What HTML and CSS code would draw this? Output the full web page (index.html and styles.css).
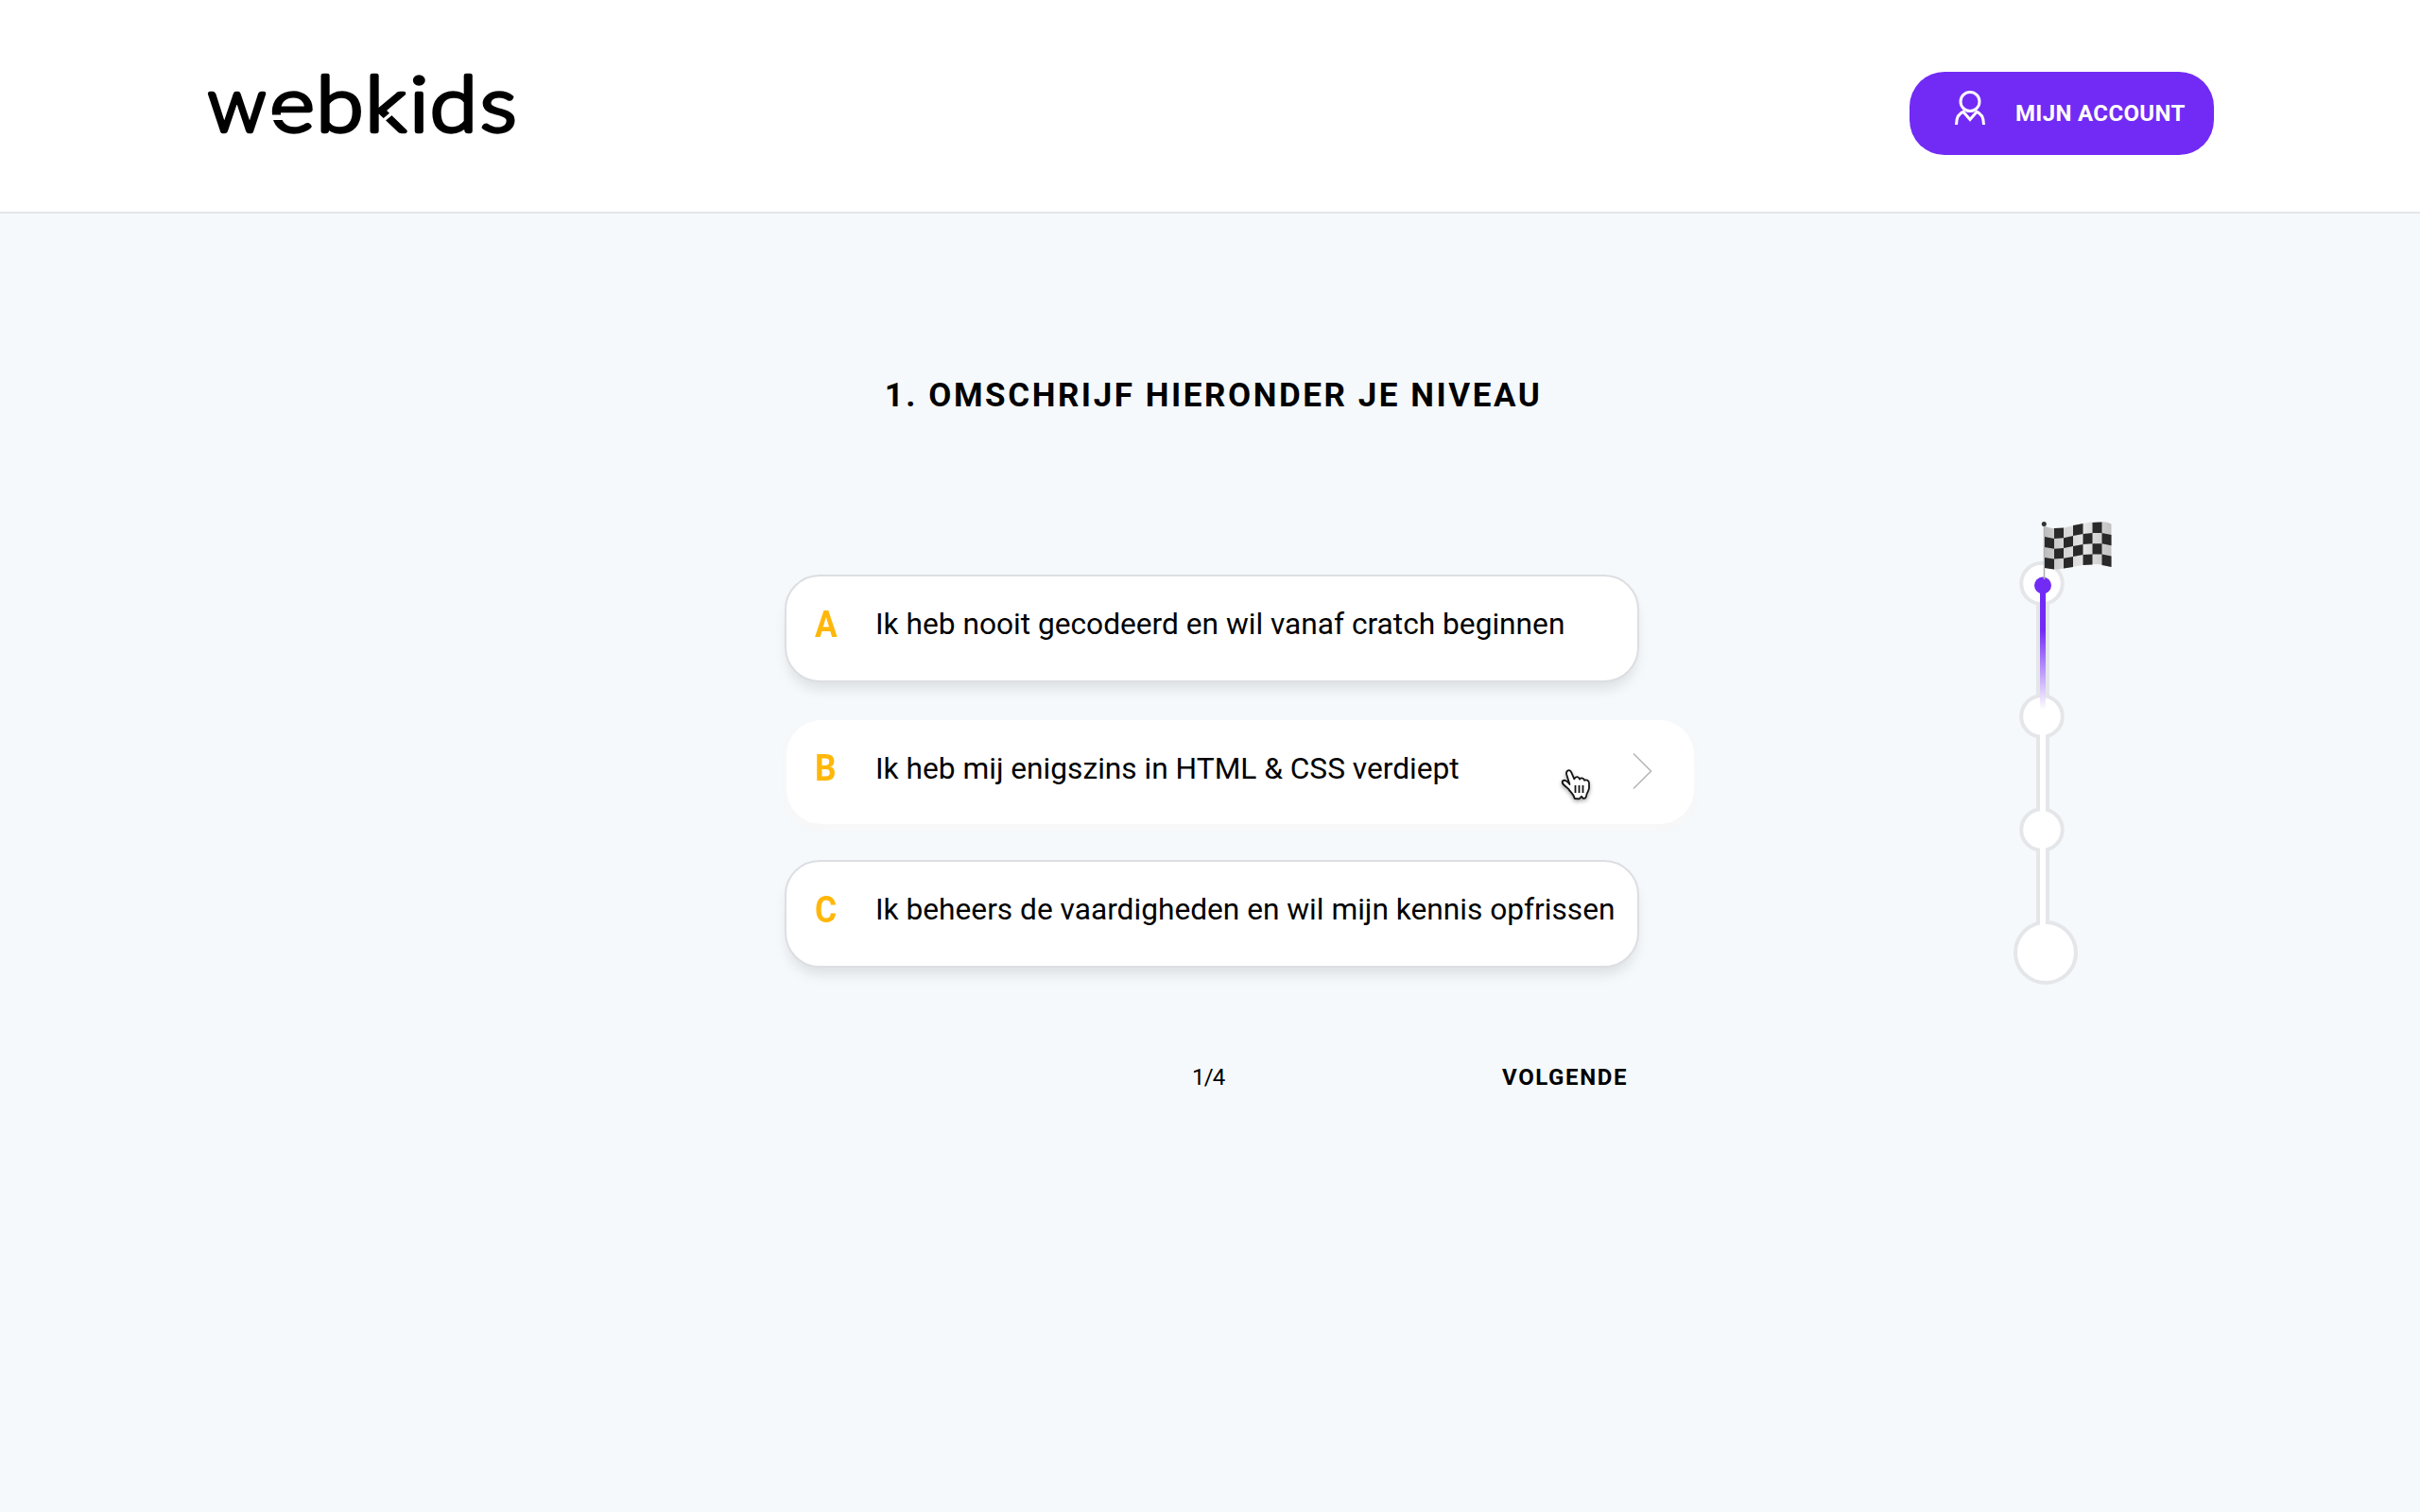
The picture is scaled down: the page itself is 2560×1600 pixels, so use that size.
FILE: index.html
```html
<!DOCTYPE html>
<html lang="nl">
<head>
<meta charset="utf-8">
<title>Webkids</title>
<link rel="stylesheet" href="styles.css">
</head>
<body>
<header class="header">
  <svg class="logo" width="340" height="100" viewBox="0 0 340 100" role="img" aria-label="webkids">
    <text class="logo-text" y="79" x="4">w</text>
    <text class="logo-text" transform="scale(1.13 1)" y="79" x="61.500 104.800 151 192.300 211.600 258.500">ebkids</text>
    <path d="M68 61.500h49v5.500H68z" fill="#fff"/>
    <path d="M190 67 206 53.500" stroke="#fff" stroke-width="3.500"/>
  </svg>
  <a class="account">
    <svg class="account-icon" width="34" height="38" viewBox="0 0 34 38" fill="none" stroke="#fff" stroke-width="3">
      <circle cx="17" cy="12.500" r="10"/>
      <path d="M2.500 37c0-7 3-12.500 8.500-14.200M31.500 37c0-7-3-12.500-8.500-14.200M10 23.500l7 8 7-8"/>
    </svg>
    <span class="account-label">MIJN ACCOUNT</span>
  </a>
</header>
<main class="main">
  <section class="quiz">
    <h1 class="title">1. OMSCHRIJF HIERONDER JE NIVEAU</h1>
    <div class="answers">
      <div class="answer"><b class="letter">A</b><span class="answer-text">Ik heb nooit gecodeerd en wil vanaf cratch beginnen</span></div>
      <div class="answer active"><b class="letter">B</b><span class="answer-text">Ik heb mij enigszins in HTML &amp; CSS verdiept</span>
        <svg class="chevron" width="24" height="42" viewBox="0 0 24 42" fill="none" stroke="#b9b9bb" stroke-width="1.700"><path d="M2 2.500 20.500 21 2 39.500"/></svg>
        <svg class="pointer" width="36" height="40" viewBox="0 0 36 40"><path d="M9.500 18 6.200 7.500C5.200 3 9.800 1.600 11.300 5.300l3 7c1.500-3.300 5-2.700 5.700.3 1.800-2 4.600-1.200 5.100 1.200 2.300-1.300 4.800.2 4.900 3v5c0 3-2.700 5-2.900 8.500l-1 2.200-2.600.3-1.500-2-2.500 2.500-4.800-.3c-.5-4-4.200-6.500-6.200-9.800C4.200 19 .5 17.500 2 14.500c2-2 5 .3 7.500 3.500zM15.500 19v8M19.500 19v8M23.500 19v8" fill="#fff" stroke="#151515" stroke-width="1.800" stroke-linejoin="round"/></svg>
      </div>
      <div class="answer"><b class="letter">C</b><span class="answer-text">Ik beheers de vaardigheden en wil mijn kennis opfrissen</span></div>
    </div>
    <footer class="pager"><span class="count">1/4</span><a class="next">VOLGENDE</a></footer>
  </section>
  <svg class="progress" width="120" height="510" viewBox="0 0 120 510">
    <defs>
      <linearGradient id="fade" x1="0" y1="0" x2="0" y2="1"><stop offset=".34" stop-color="#722bf5"/><stop offset=".95" stop-color="#722bf5" stop-opacity="0"/></linearGradient>
      <linearGradient id="cloth" x1="0" y1="0" x2="1" y2="0"><stop offset="0" stop-color="#bdbdbd"/><stop offset=".25" stop-color="#d2d2d2"/><stop offset=".6" stop-color="#e4e4e4"/><stop offset="1" stop-color="#c2c2c2"/></linearGradient>
    </defs>
    <g fill="#fff" stroke="#e5e6ea" stroke-width="4">
      <circle cx="40" cy="77.500" r="21.800"/><circle cx="40" cy="218" r="21.800"/><circle cx="40" cy="338" r="21.800"/><circle cx="44" cy="468" r="32"/>
    </g>
    <path d="M34 99h14v98H34zM34 239h14v78H34zM34 359h14v78H34z" fill="#e5e6ea"/>
    <path d="M38 90h6v360h-6z" fill="#fff"/>
    <path d="M38 80h6v138h-6z" fill="url(#fade)"/>
    <circle cx="41" cy="79.500" r="9" fill="#722bf5"/>
    <path d="M42.500 15v58" stroke="#aeb2b5" stroke-width="1.600"/>
    <circle cx="42.300" cy="14.500" r="2.500" fill="#333"/>
    <path d="M43 17q10 3.500 20 1.500L83.500 14q20-4 30 .5V60q-10-4.500-30-2L63 61.500q-10 2-20-.5z" fill="url(#cloth)"/>
    <path fill="#292929" d="M53 19l10-.5v10.800l-10 .6zM53 40.800l10-.8v10.800l-10 .8zM73 16l10.500-2v11L73 27zM73 38l10.500-2v11L73 49zM93.500 13l10-.5v11.400l-10 .2zM93.500 35.300h10v11.300l-10-.2zM43 28l10 1.900v10.900L43 39zM43 50l10 1.600v10.900L43 61zM63 29.300 73 27v11l-10 2zM63 50.800 73 49v11l-10 1.500zM83.500 25l10-.9v11.200l-10 .7zM83.500 47l10-.6v11.100l-10 .5zM103.500 23.900l10 2v11.400l-10-2zM103.500 46.600l10 2V60l-10-2z"/>
  </svg>
</main>
</body>
</html>
```
FILE: styles.css
```css
* { box-sizing: border-box; }
body { margin: 0; min-height: 1600px; background: #f5f9fc; color: #000; font-family: Roboto, "Liberation Sans", sans-serif; }
.header { height: 226px; padding: 60px 218px 0 216px; display: flex; justify-content: space-between; align-items: flex-start; background: #fff; border-bottom: 2px solid #e3e7ea; }
.logo-text { font: 300 80px Lato, sans-serif; stroke: #000; stroke-width: 4.300; stroke-linejoin: round; }
.account { width: 322px; height: 88px; margin-top: 16px; padding: 19px 0 0 47px; display: flex; gap: 31px; border-radius: 37px; background: #722bf5; color: #fff; }
.account-label { margin-top: 11px; font-size: 24px; line-height: 28px; font-weight: 700; letter-spacing: .35px; white-space: nowrap; }
.main { padding-left: 830px; display: flex; align-items: flex-start; }
.quiz { width: 962px; padding-top: 170px; }
.title { width: 907px; margin: 0; text-align: center; font-size: 35px; line-height: 46px; font-weight: 700; letter-spacing: 2.550px; white-space: nowrap; }
.answers { padding-top: 166px; }
.answer { position: relative; width: 904px; height: 114px; padding-left: 30px; display: flex; align-items: flex-start; background: #fff; border: 2px solid #dcdee2; border-radius: 37px; box-shadow: 0 10px 14px -3px rgba(0,0,0,.1); }
.answer.active { width: 960px; height: 110px; margin: 40px 0 38px 2px; border: 0; box-shadow: 0 4px 8px rgba(250,246,244,.8); }
.letter { width: 64px; padding-top: 24px; font-size: 38px; line-height: 54px; color: #ffb70a; transform: scaleX(.93); transform-origin: left; }
.answer-text { padding-top: 26px; font-size: 31.680px; line-height: 50px; white-space: nowrap; }
.active .answer-text { padding-top: 27px; }
.chevron { position: absolute; right: 42px; top: 33px; }
.pointer { position: absolute; left: 819px; top: 50px; filter: drop-shadow(0 2px 2px rgba(0,0,0,.35)); }
.pager { width: 892px; padding: 102px 0 0 431px; display: flex; justify-content: space-between; font-size: 24px; line-height: 28px; }
.count { letter-spacing: -.8px; }
.next { font-weight: 700; letter-spacing: 1.600px; }
.progress { margin: 314px 0 0 328px; }
```
